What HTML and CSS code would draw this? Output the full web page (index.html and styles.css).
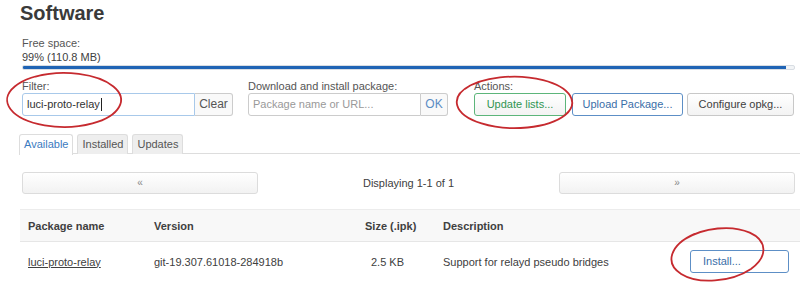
FILE: index.html
```html
<!DOCTYPE html>
<html>
<head>
<meta charset="utf-8">
<link rel="stylesheet" href="styles.css">
</head>
<body>
<div class="page">
  <h2 class="title">Software</h2>
  <div class="section">
    <div class="label">Free space:</div>
    <div class="value">99% (110.8 MB)</div>
    <div class="bar"><div class="fill" style="width:99%"></div></div>

    <div class="controls">
      <div class="group g-filter">
        <div class="label">Filter:</div>
        <div class="joined">
          <div class="input focused filter-input">luci-proto-relay<span class="caret"></span></div>
          <div class="addon">Clear</div>
        </div>
      </div>
      <div class="group g-download">
        <div class="label">Download and install package:</div>
        <div class="joined">
          <div class="input url-input placeholder">Package name or URL...</div>
          <div class="addon ok">OK</div>
        </div>
      </div>
      <div class="group g-actions">
        <div class="label">Actions:</div>
        <div class="btns">
          <div class="btn green b-update">Update lists...</div>
          <div class="btn blue b-upload">Upload Package...</div>
          <div class="btn gray b-config">Configure opkg...</div>
        </div>
      </div>
    </div>
  </div>

  <div class="tabs">
    <div class="tab active">Available</div>
    <div class="tab">Installed</div>
    <div class="tab">Updates</div>
  </div>

  <div class="section">
    <div class="pager">
      <div class="pbtn">&laquo;</div>
      <div class="pinfo">Displaying 1-1 of 1</div>
      <div class="pbtn">&raquo;</div>
    </div>
  </div>

  <table class="pkgs">
    <thead>
      <tr>
        <th class="c1">Package name</th>
        <th class="c2">Version</th>
        <th class="c3">Size (.ipk)</th>
        <th class="c4">Description</th>
        <th class="c5"></th>
      </tr>
    </thead>
    <tbody>
      <tr>
        <td class="c1"><span class="link">luci-proto-relay</span></td>
        <td class="c2">git-19.307.61018-284918b</td>
        <td class="c3 size">2.5 KB</td>
        <td class="c4">Support for relayd pseudo bridges</td>
        <td class="c5"><div class="btn blue b-install">Install...</div></td>
      </tr>
    </tbody>
  </table>
</div>

<svg class="marks" width="800" height="287" viewBox="0 0 800 287">
  <path d="M35.5 76.6 A57 27 0 0 1 92.5 123.4 A57 27 0 1 1 54.1 73.4" />
  <path d="M464.8 89 A58 26 0 0 1 565.2 115 A58 26 0 1 1 470.6 85.3" />
  <g transform="rotate(-9 718 254)">
    <path d="M687.8 234.1 A47 26 0 0 1 748.2 273.9 A47 26 0 1 1 698.1 230.4" />
  </g>
</svg>
</body>
</html>
```

FILE: styles.css
```css
* { box-sizing: border-box; }
html, body { margin: 0; padding: 0; background: #fff; }
body {
  font-family: "Liberation Sans", Arial, sans-serif;
  font-size: 11px;
  color: #404040;
  width: 800px;
  height: 287px;
  overflow: hidden;
  position: relative;
}
.page { padding-left: 20px; }
.title {
  margin: 1px 0 11px 0;
  font-size: 20px;
  line-height: 24px;
  font-weight: bold;
  color: #3a3a3a;
}
.section { padding: 0 5px 0 2px; }
.label { line-height: 14px; color: #555; }
.value { line-height: 14px; color: #404040; }
.bar {
  margin-top: 1px;
  height: 5px;
  border: 1px solid #d8dde3;
  border-radius: 2px;
  background: #f2f4f6;
  overflow: hidden;
}
.fill { height: 100%; background: #1f64b5; }

.controls { display: flex; margin-top: 9px; }
.group { display: flex; flex-direction: column; }
.g-filter { width: 211px; }
.g-download { width: 200px; margin-left: 15px; }
.g-actions { margin-left: 26px; }
.joined { display: flex; height: 23px; }
.input {
  height: 23px;
  border: 1px solid #ccc;
  border-radius: 3px 0 0 3px;
  padding: 0 4px;
  line-height: 21px;
  color: #333;
  display: flex;
  align-items: center;
}
.filter-input { width: 173px; border-color: #a8c9ea; }
.url-input { width: 173px; color: #999; }
.caret { display: inline-block; width: 1px; height: 13px; background: #222; margin-left: 1px; }
.addon {
  flex: 1;
  border: 1px solid #ccc;
  border-left: none;
  border-radius: 0 3px 3px 0;
  background: #f9f9f9;
  text-align: center;
  line-height: 21px;
  font-size: 12px;
  color: #555;
}
.addon.ok { color: #5b8cc4; background: #f9f9f9; }
.btns { display: flex; }
.btn {
  height: 23px;
  border: 1px solid #ccc;
  border-radius: 3px;
  background: linear-gradient(#ffffff, #f3f3f3);
  text-align: center;
  line-height: 21px;
  font-size: 11px;
}
.btn.green { border-color: #5cb57a; color: #2f9552; }
.btn.blue { border-color: #5d8fc6; color: #3a6ea8; background: #fff; }
.btn.gray { border-color: #c8c8c8; color: #404040; }
.b-update { width: 92px; }
.b-upload { width: 111px; margin-left: 6px; }
.b-config { width: 107px; margin-left: 4px; }

.tabs {
  display: flex;
  gap: 4px;
  margin-top: 18px;
  margin-left: -1px;
  border-bottom: 1px solid #ddd;
  height: 20px;
}
.tab {
  height: 20px;
  padding: 0 4px;
  line-height: 19px;
  border: 1px solid #ddd;
  border-bottom: none;
  border-radius: 3px 3px 0 0;
  background: #eee;
  color: #555;
}
.tab.active {
  background: #fff;
  color: #3b7bbf;
  height: 21px;
}

.pager {
  display: flex;
  align-items: center;
  margin-top: 18px;
  height: 22px;
}
.pbtn {
  width: 236px;
  height: 22px;
  border: 1px solid #dcdcdc;
  border-radius: 3px;
  background: linear-gradient(#ffffff, #f2f2f2);
  text-align: center;
  line-height: 20px;
  color: #888;
  font-size: 10px;
}
.pinfo { flex: 1; text-align: center; color: #404040; }

.pkgs {
  margin-top: 15px;
  width: 780px;
  border-collapse: collapse;
  table-layout: fixed;
}
.pkgs th, .pkgs td { text-align: left; padding: 0 0 0 8px; white-space: nowrap; }
.pkgs th {
  height: 32px;
  background: #f8f8f8;
  border-top: 1px solid #ececec;
  border-bottom: 1px solid #e6e6e6;
  font-weight: bold;
  color: #404040;
}
.pkgs td { height: 40px; color: #404040; }
.c1 { width: 126px; }
.c2 { width: 211px; }
.c3 { width: 78px; }
.c4 { width: 245px; }
.pkgs td.size { padding-left: 14px; }
.link { text-decoration: underline; color: #404040; }
.b-install {
  width: 99px;
  margin-left: 2px;
  border-color: #7ea7d6;
  text-align: left;
  padding-left: 12px;
}

.marks {
  position: absolute;
  left: 0;
  top: 0;
  pointer-events: none;
}
.marks path {
  fill: none;
  stroke: #c62a2f;
  stroke-width: 1.8;
}
```
